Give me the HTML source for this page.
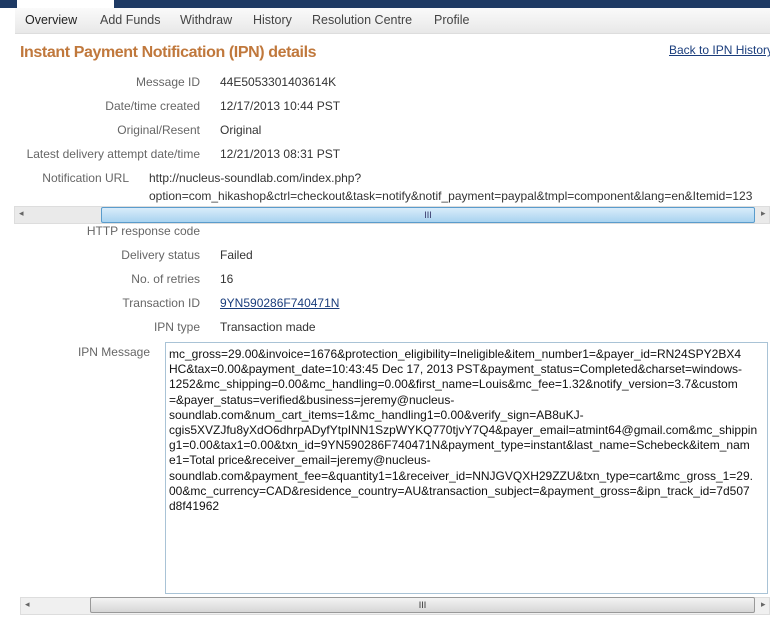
<!DOCTYPE html>
<html><head><meta charset="utf-8"><style>
body{margin:0;width:770px;height:630px;overflow:hidden;background:#fff;font-family:"Liberation Sans",Arial,sans-serif;font-size:12px;color:#333;position:relative}
.a{position:absolute;white-space:nowrap}
.top{left:0;top:0;width:770px;height:8px;background:#1e3a64}
.tab{left:17px;top:0;width:97px;height:8px;background:#fff}
.nav{left:15px;top:8px;width:755px;height:25px;background:linear-gradient(#fafafa,#e8e8e8);border-bottom:1px solid #ddd}
.nav span{position:absolute;top:5px;font-size:12.5px;color:#444}
.lbl{right:570px;color:#666}
.val{left:220px;color:#333}
.sb{height:16px;background:#eaeaea;border:1px solid #ddd}
</style></head><body>
<div class="a top"></div><div class="a tab"></div>
<div class="a nav">
<span style="left:10px;color:#222">Overview</span>
<span style="left:85px">Add Funds</span>
<span style="left:165px">Withdraw</span>
<span style="left:238px">History</span>
<span style="left:297px">Resolution Centre</span>
<span style="left:419px">Profile</span>
</div>
<div class="a" style="left:20px;top:44px;font-size:16px;letter-spacing:-0.4px;font-weight:bold;color:#c0783c">Instant Payment Notification (IPN) details</div>
<div class="a" style="left:669px;top:43px;color:#1a3d7c;text-decoration:underline">Back to IPN History</div>

<div class="a lbl" style="top:75px">Message ID</div><div class="a val" style="top:75px">44E5053301403614K</div>
<div class="a lbl" style="top:99px">Date/time created</div><div class="a val" style="top:99px">12/17/2013 10:44 PST</div>
<div class="a lbl" style="top:123px">Original/Resent</div><div class="a val" style="top:123px">Original</div>
<div class="a lbl" style="top:147px">Latest delivery attempt date/time</div><div class="a val" style="top:147px">12/21/2013 08:31 PST</div>
<div class="a lbl" style="top:171px;right:641px">Notification URL</div>
<div class="a" style="left:149px;top:171px">http://nucleus-soundlab.com/index.php?</div>
<div class="a" style="left:149px;top:189px">option=com_hikashop&amp;ctrl=checkout&amp;task=notify&amp;notif_payment=paypal&amp;tmpl=component&amp;lang=en&amp;Itemid=123</div>
<div class="a sb" style="left:14px;top:206px;width:754px"></div>
<div class="a" style="left:101px;top:207px;width:652px;height:14px;background:linear-gradient(#d9ecfa,#a9d3f0);border:1px solid #5a9ccc;border-radius:2px;text-align:center;font-size:9px;line-height:14px;color:#336">III</div>
<div class="a" style="left:19px;top:208px;font-size:9px;color:#666">◂</div>
<div class="a" style="left:761px;top:208px;font-size:9px;color:#666">▸</div>

<div class="a lbl" style="top:224px">HTTP response code</div>
<div class="a lbl" style="top:248px">Delivery status</div><div class="a val" style="top:248px">Failed</div>
<div class="a lbl" style="top:272px">No. of retries</div><div class="a val" style="top:272px">16</div>
<div class="a lbl" style="top:296px">Transaction ID</div><div class="a val" style="top:296px;color:#1a3d7c;text-decoration:underline">9YN590286F740471N</div>
<div class="a lbl" style="top:320px">IPN type</div><div class="a val" style="top:320px">Transaction made</div>
<div class="a lbl" style="top:345px;right:620px">IPN Message</div>
<div class="a" style="left:165px;top:342px;width:601px;height:250px;border:1px solid #a9c3d6"></div>
<div class="a" style="left:169px;top:347px;line-height:15.2px;color:#111;white-space:pre">mc_gross=29.00&amp;invoice=1676&amp;protection_eligibility=Ineligible&amp;item_number1=&amp;payer_id=RN24SPY2BX4
HC&amp;tax=0.00&amp;payment_date=10:43:45 Dec 17, 2013 PST&amp;payment_status=Completed&amp;charset=windows-
1252&amp;mc_shipping=0.00&amp;mc_handling=0.00&amp;first_name=Louis&amp;mc_fee=1.32&amp;notify_version=3.7&amp;custom
=&amp;payer_status=verified&amp;business=jeremy@nucleus-
soundlab.com&amp;num_cart_items=1&amp;mc_handling1=0.00&amp;verify_sign=AB8uKJ-
cgis5XVZJfu8yXdO6dhrpADyfYtpINN1SzpWYKQ770tjvY7Q4&amp;payer_email=atmint64@gmail.com&amp;mc_shippin
g1=0.00&amp;tax1=0.00&amp;txn_id=9YN590286F740471N&amp;payment_type=instant&amp;last_name=Schebeck&amp;item_nam
e1=Total price&amp;receiver_email=jeremy@nucleus-
soundlab.com&amp;payment_fee=&amp;quantity1=1&amp;receiver_id=NNJGVQXH29ZZU&amp;txn_type=cart&amp;mc_gross_1=29.
00&amp;mc_currency=CAD&amp;residence_country=AU&amp;transaction_subject=&amp;payment_gross=&amp;ipn_track_id=7d507
d8f41962</div>
<div class="a sb" style="left:20px;top:597px;width:748px;background:#f0f0f0"></div>
<div class="a" style="left:90px;top:597px;width:663px;height:14px;background:linear-gradient(#f4f4f4,#d6d6d6);border:1px solid #999;border-radius:2px;text-align:center;font-size:9px;line-height:14px;color:#333">III</div>
<div class="a" style="left:25px;top:599px;font-size:9px;color:#666">◂</div>
<div class="a" style="left:761px;top:599px;font-size:9px;color:#666">▸</div>
</body></html>
